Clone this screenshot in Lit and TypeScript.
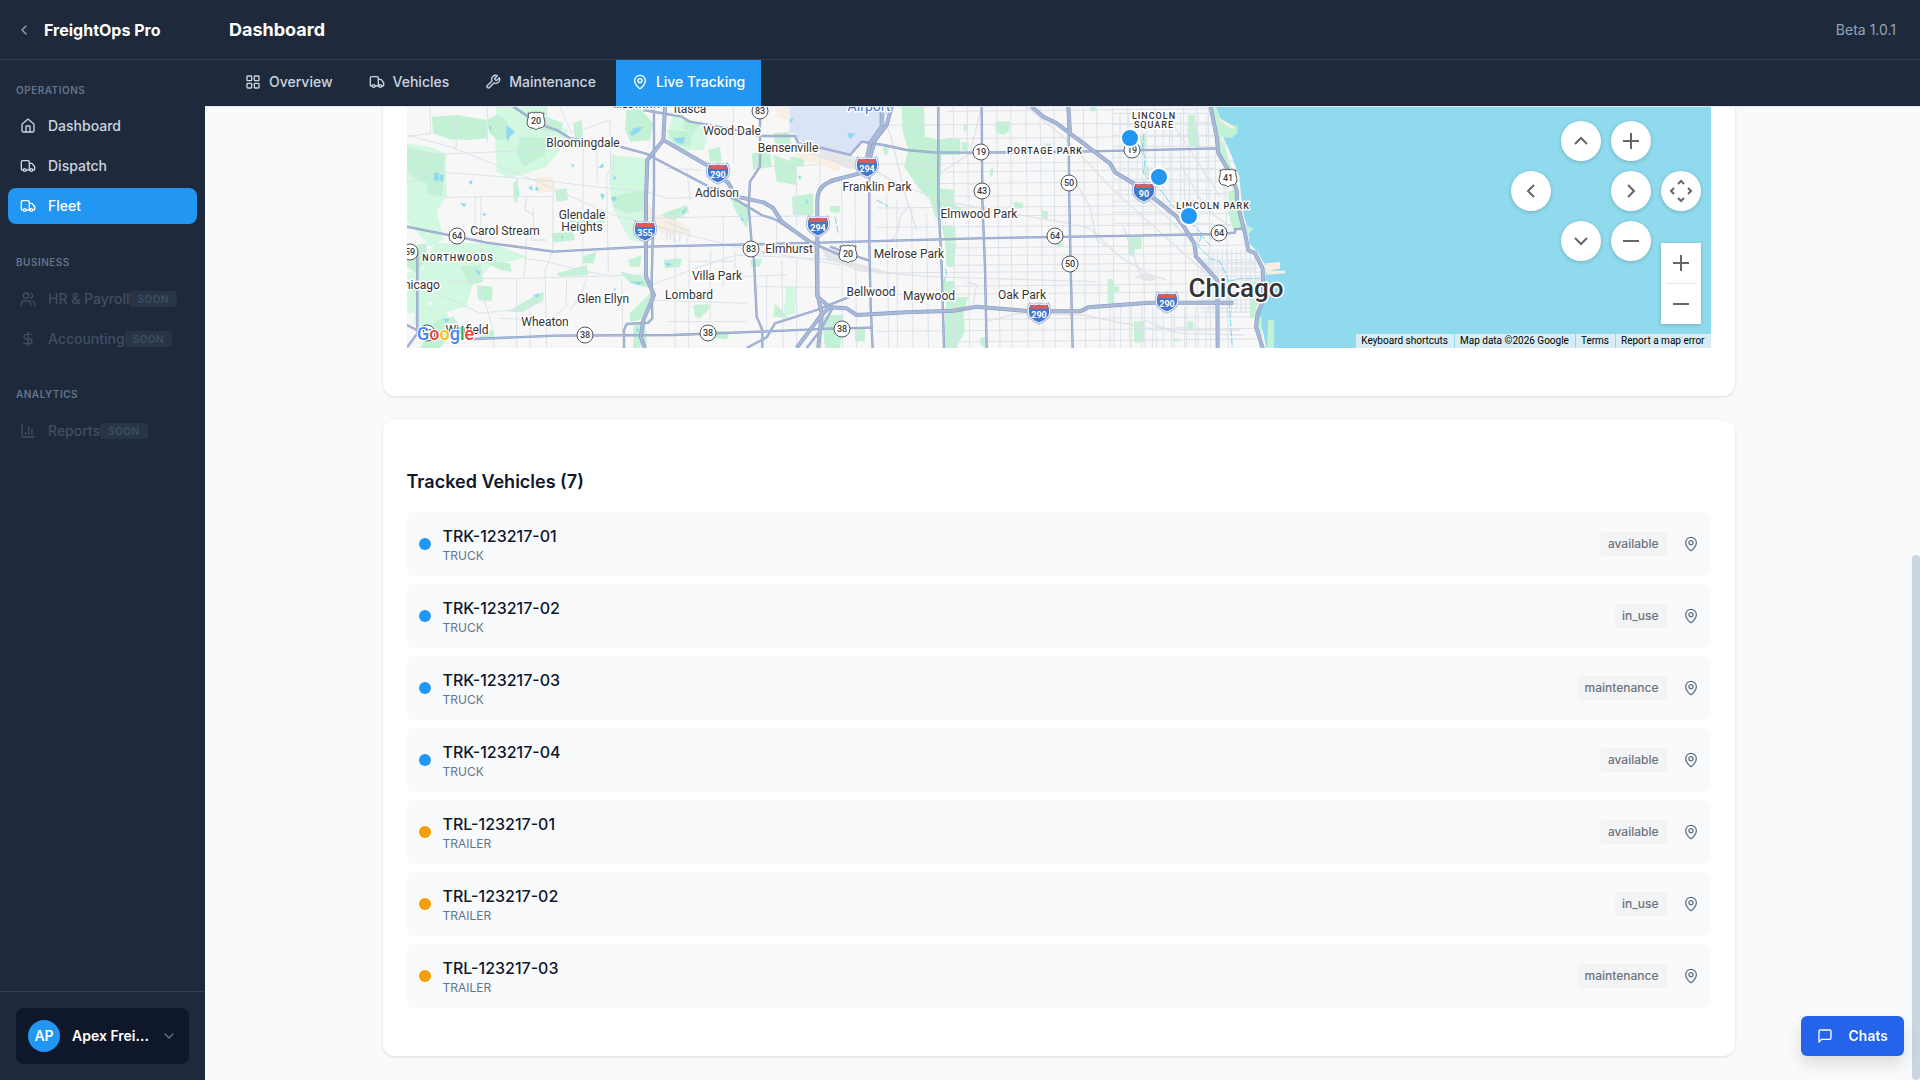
import { LitElement, html, svg, css } from "lit";
import { customElement, property } from "lit/decorators.js";
import { classMap } from "lit/directives/class-map.js";

/* ---------- Icons (24px grid, stroked) ---------- */

const pin = svg`<path d="M20 10c0 4.993-5.539 10.193-7.399 11.799a1 1 0 0 1-1.202 0C9.539 20.193 4 14.993 4 10a8 8 0 0 1 16 0"/><circle cx="12" cy="10" r="3"/>`;

const ICONS: Record<string, unknown> = {
  left: svg`<path d="m15 18-6-6 6-6"/>`,
  down: svg`<path d="m6 9 6 6 6-6"/>`,
  home: svg`<path d="M15 21v-8a1 1 0 0 0-1-1h-4a1 1 0 0 0-1 1v8"/><path d="M3 10a2 2 0 0 1 .709-1.528l7-5.999a2 2 0 0 1 2.582 0l7 5.999A2 2 0 0 1 21 10v9a2 2 0 0 1-2 2H5a2 2 0 0 1-2-2z"/>`,
  truck: svg`<path d="M14 18V6a2 2 0 0 0-2-2H4a2 2 0 0 0-2 2v11a1 1 0 0 0 1 1h2"/><path d="M15 18H9"/><path d="M19 18h2a1 1 0 0 0 1-1v-3.65a1 1 0 0 0-.22-.624l-3.48-4.35A1 1 0 0 0 17.52 8H14"/><circle cx="17" cy="18" r="2"/><circle cx="7" cy="18" r="2"/>`,
  users: svg`<path d="M16 21v-2a4 4 0 0 0-4-4H6a4 4 0 0 0-4 4v2"/><circle cx="9" cy="7" r="4"/><path d="M22 21v-2a4 4 0 0 0-3-3.87"/><path d="M16 3.13a4 4 0 0 1 0 7.75"/>`,
  dollar: svg`<path d="M12 2v20"/><path d="M17 5H9.500a3.500 3.500 0 0 0 0 7h5a3.500 3.500 0 0 1 0 7H6"/>`,
  chart: svg`<path d="M3 3v16a2 2 0 0 0 2 2h16"/><path d="M18 17V9"/><path d="M13 17V5"/><path d="M8 17v-3"/>`,
  grid: svg`<rect x="3" y="3" width="7" height="7" rx="1"/><rect x="14" y="3" width="7" height="7" rx="1"/><rect x="14" y="14" width="7" height="7" rx="1"/><rect x="3" y="14" width="7" height="7" rx="1"/>`,
  wrench: svg`<path d="M14.7 6.3a1 1 0 0 0 0 1.400l1.600 1.600a1 1 0 0 0 1.400 0l3.770-3.770a6 6 0 0 1-7.940 7.940l-6.910 6.910a2.120 2.120 0 0 1-3-3l6.910-6.910a6 6 0 0 1 7.940-7.940l-3.760 3.760z"/>`,
  pin,
  chat: svg`<path d="M21 15a2 2 0 0 1-2 2H7l-4 4V5a2 2 0 0 1 2-2h14a2 2 0 0 1 2 2z"/>`,
};

const icon = (name: string) => html`<svg class="icon" viewBox="0 0 24 24" aria-hidden="true">${ICONS[name]}</svg>`;

const iconStyles = css`
  .icon {
    display: block;
    flex: none;
    width: 16px;
    height: 16px;
    fill: none;
    stroke: currentColor;
    stroke-width: 2;
    stroke-linecap: round;
    stroke-linejoin: round;
  }
  * {
    box-sizing: border-box;
  }
  button {
    font: inherit;
    color: inherit;
    border: 0;
    background: none;
    padding: 0;
    cursor: pointer;
  }
  a {
    color: inherit;
    text-decoration: none;
  }
`;

/* ---------- Map ---------- */

/* Geometry is drawn at three units per pixel; the city lists
   start 1290 units further east than the suburban ones. */

const LAND =
  "0,-60 2432,-60 2448,20 2470,60 2512,80 2512,100 2480,115 2500,170 2520,230 2524,290 2530,330 2542,375 2560,385 2545,402 2550,430 2580,460 2600,500 2600,600 2572,640 2590,700 2602,760 0,760";

const WEST_PALE = [
  "20,130 90,140 138,160 140,290 110,330 130,420 90,440 20,360",
  "290,20 440,20 440,70 505,90 480,150 440,200 330,235 290,215 285,100",
  "635,165 740,175 738,430 690,420 640,330 628,250",
  "105,430 280,430 380,470 270,500 215,560 200,620 120,640 60,560 80,470",
  "20,520 80,500 110,580 60,640 20,640",
  "1160,560 1190,560 1185,640 1150,650",
  "820,40 930,90 910,150 840,150 800,110",
  "50,610 140,620 150,690 90,700 40,670",
  "20,260 60,240 120,300 80,340 20,330",
];

const WEST_PARKS = [
  "95,50 170,45 260,60 262,115 205,120 150,118 100,100",
  "260,60 290,45 320,60 330,115 290,120 270,100",
  "20,140 60,150 135,165 130,215 95,250 55,245 20,210",
  "80,215 135,225 125,290 80,280",
  "360,110 440,115 435,165 370,200 350,160",
  "425,45 490,70 480,100 430,90",
  "520,70 545,60 550,115 525,120",
  "680,30 720,25 760,70 750,120 690,125 675,85",
  "800,90 880,95 870,140 825,135",
  "850,60 900,70 885,95 850,88",
  "925,150 960,140 965,185 930,185",
  "1055,160 1110,155 1115,200 1060,210",
  "1120,100 1165,95 1180,150 1130,155",
  "1120,165 1190,190 1190,255 1130,245",
  "1170,170 1215,175 1210,200 1175,198",
  "1175,290 1240,280 1240,345 1180,345",
  "635,290 735,270 730,330 680,340 640,320",
  "465,270 500,265 505,300 470,305",
  "505,350 610,345 615,370 510,372",
  "455,400 520,395 525,420 460,428",
  "545,470 590,455 580,490 550,490",
  "470,520 560,495 565,525 480,530",
  "685,480 725,465 720,500 690,500",
  "660,515 735,530 750,565 690,550",
  "690,640 760,570 745,610 720,660 690,665",
  "700,680 735,660 740,730 715,744 700,744",
  "880,615 930,612 925,630 900,655 885,650",
  "930,690 990,695 980,718 940,715",
  "790,480 845,475 840,500 795,505",
  "790,340 860,315 868,335 820,362 780,360",
  "985,230 1010,290 1050,330 1040,385 1010,340 990,290",
  "1050,480 1085,475 1080,500 1055,500",
  "1125,610 1165,655 1120,650",
  "1265,650 1320,645 1320,744 1275,744",
  "180,500 240,495 250,545 210,555",
  "230,555 278,560 275,603 235,600",
  "340,625 400,590 430,575 430,600 370,635 320,635",
  "20,440 80,430 80,480 50,520 20,500",
  "110,660 160,650 190,690 140,720 120,744 60,744",
  "245,480 330,490 335,515 300,510",
  "340,250 355,235 352,310 342,300",
  "240,700 280,690 282,715 240,715",
];

const WEST_PONDS = [
  "105,215 118,220 115,245 100,240",
  "120,225 132,222 128,245 118,240",
  "320,75 345,95 330,110 322,125 318,100",
  "690,100 700,85 728,80 715,98 695,108",
  "820,115 855,112 850,132 830,128",
  "265,75 275,82 270,95",
  "205,245 218,240 215,255",
  "385,265 395,255 398,272",
  "408,258 418,270 406,272",
  "512,192 524,194 518,202",
  "595,205 608,190 612,202",
  "600,280 615,285 608,300",
  "632,292 648,290 650,302 636,302",
  "638,228 650,232 642,242",
  "248,338 260,342 252,350",
  "180,308 200,312 192,322",
  "845,335 862,320 850,345",
  "795,488 818,492 802,500",
  "225,508 242,515 235,525",
  "400,585 420,580 412,595",
  "690,545 735,545 715,555",
  "640,568 650,562 644,574",
  "710,683 718,690 708,698",
  "1085,452 1098,455 1090,464",
  "1195,225 1205,232 1198,240",
  "1220,298 1226,315 1216,305",
  "1020,340 1032,362 1024,362",
  "482,405 492,410 484,418",
  "130,655 150,658 138,668",
  "70,545 90,550 80,556",
  "355,260 358,290 353,280",
];

const CITY_PARKS = [
  "215,20 282,20 285,110 320,118 390,115 392,165 335,165 330,265 375,270 370,310 400,330 345,330 330,370 315,350 300,300 270,270 222,200 235,150 218,95",
  "395,125 418,128 412,155 395,150",
  "335,375 375,378 378,425 345,425",
  "345,425 378,430 372,500 350,500",
  "340,545 372,542 375,590 345,588",
  "350,595 415,590 400,640 405,690 380,744 342,744 345,650",
  "496,66 540,64 538,92 520,105 498,95",
  "550,306 580,308 578,325 552,325",
  "636,330 655,335 652,358 638,355",
  "480,210 490,202 488,225 480,230",
  "895,412 935,412 935,448 915,448 912,470 895,465",
  "833,538 850,538 852,558 868,560 866,575 850,575 850,612 833,610",
  "912,664 942,664 942,727 912,727",
  "1075,45 1095,45 1095,60 1105,105 1110,142 1080,140 1072,110",
  "930,108 948,108 945,150 932,148",
  "942,195 955,200 958,230 944,222",
  "1073,664 1090,664 1090,690 1073,692",
  "1030,716 1050,716 1050,724 1030,724",
  "75,686 105,686 105,724 75,724",
  "0,645 40,645 40,680 30,744 0,744",
  "0,318 30,318 28,338 0,335",
  "680,430 700,430 700,440 680,440",
  "640,130 665,132 660,142",
  "400,72 410,72 410,95 402,92",
  "450,715 465,712 465,744 452,735",
  "778,20 798,20 796,35 780,33",
  "160,140 172,142 175,162 162,165",
];

const SHORE_PARKS = [
  "1146,20 1158,20 1175,62 1200,82 1222,76 1222,100 1205,114 1172,112 1190,160 1210,220 1214,270 1222,330 1240,385 1210,390 1195,340 1195,275 1212,268 1200,215 1170,160 1158,100",
  "1245,375 1270,385 1255,402 1246,398",
  "1262,545 1285,545 1285,600 1272,655 1260,655",
  "1275,655 1295,650 1296,740 1312,740 1314,660 1333,660 1332,744 1290,744 1280,690",
];

const WEST_STREETS = [
  "20,105 150,140 400,240 640,345 740,370 1000,440 1320,495",
  "20,165 180,160 430,150",
  "20,250 60,235 85,215 240,225 420,240 600,262 740,275 800,295 890,292 960,262",
  "138,292 260,290 460,290",
  "170,60 168,150",
  "262,20 262,130",
  "440,20 440,150",
  "550,130 548,500",
  "480,20 515,100 630,60 632,210 620,225 625,520",
  "225,290 225,400",
  "243,290 243,540",
  "460,240 458,455 435,510 440,740",
  "20,545 60,560 180,610 240,640 330,630 430,605",
  "215,535 370,535 560,530 730,525",
  "380,380 378,455 372,535",
  "150,545 212,545 215,510",
  "375,475 440,485 560,515 620,525",
  "500,535 498,620 450,660 300,655",
  "240,560 280,690 282,744",
  "560,535 545,580 510,630",
  "825,360 825,740",
  "868,440 866,744",
  "932,450 930,660",
  "970,350 970,560",
  "740,355 960,350 1240,348",
  "740,560 900,500 1010,465 1130,470 1320,480",
  "740,600 1040,610",
  "800,665 1040,665",
  "1005,455 1005,530 1160,525",
  "1000,20 1000,190",
  "800,205 900,210",
  "1080,200 1250,195",
  "1145,480 1150,744",
  "1190,480 1190,744",
  "1100,530 1100,690",
  "1130,360 1130,430",
  "1190,200 1190,380",
  "1260,110 1260,290",
  "860,200 870,300",
  "640,165 640,240",
  "350,535 350,744",
  "390,600 390,744",
  "665,535 668,700",
  "870,484 1000,484",
  "1070,560 1320,562",
  "20,205 60,212 80,215",
  "400,320 400,380",
  "590,130 592,250",
  "90,20 92,100 20,110",
];

const WEST_RAIL = [
  "780,345 850,348",
  "795,365 870,395 860,425",
  "1240,420 1290,470 1320,480",
  "390,380 395,420 440,420",
  "1180,140 1320,190",
  "380,290 375,330 400,345",
  "800,385 800,425",
  "810,388 812,420",
  "820,392 822,425",
  "840,400 838,425",
];

const CITY_RAIL = [
  "140,20 180,100 230,300 260,390",
  "235,320 210,350 205,390 180,430",
  "0,130 200,250 330,300 480,330 720,370 780,385 870,470 960,525 1010,540",
  "0,480 60,490 180,520 300,530 470,535 800,545",
  "410,545 440,555 430,610",
  "470,665 560,640 760,645 980,690 1080,680",
  "590,20 700,110 850,270 960,370 1140,530",
  "745,110 900,250 1010,350 1090,430",
  "725,230 780,320 800,420 830,440",
  "330,220 420,160 455,20",
  "930,520 975,540",
  "940,660 1020,690 1230,690",
  "975,680 1050,700 1240,705",
  "880,380 930,520",
  "1000,30 1100,180 1170,290",
  "1050,190 1130,330 1200,380",
];

const CREEKS = [
  "942,100 938,140 945,180 940,220 1000,280 1020,310 1060,350 1100,385 1115,400 1105,440 1140,475 1170,485 1195,540 1200,640 1207,744",
  "1110,400 1130,425 1145,440",
  "1195,545 1230,535 1290,535",
  "15,350 25,400",
  "345,505 350,520 342,545",
  "140,300 175,320",
];

const HIGHWAYS = [
  "M795,20 L790,120 L742,180 L738,300 L738,530 L762,585 L730,660 L722,710 L735,744",
  "M790,120 L920,195 L985,250 L1010,290 L1090,307 L1120,325 L1145,365 L1200,405 L1250,440 L1252,590 L1290,622 L1340,625 L1370,645 L1520,637 L1660,632 L1730,620 L1890,634 L2040,634 L2065,622 L2250,608 L2500,608",
  "M1400,180 L1410,130 L1445,80 L1445,20 M1408,180 L1425,120 L1460,75 L1475,20",
  "M1290,243 L1400,215 M1320,237 C1270,245 1252,270 1252,300 L1252,580 L1265,640 L1255,744",
  "M1190,744 L1260,650 L1290,620",
  "M1895,20 L1930,50 L1970,70 L2010,100 L2070,145 L2130,190 L2145,217 L2200,250 L2275,305 L2330,350 L2355,385 L2383,430 L2388,470 L2452,540 L2453,744",
  "M2005,20 L2010,100",
  "M2432,20 L2450,110 L2455,160 L2490,220 L2510,270 L2512,310 L2535,400 L2545,450 L2565,460 L2588,505 L2590,600 L2573,640 L2568,680 L2588,744",
];

const ARTERIALS = [
  "M340,20 L385,50 L435,78 L470,90 L510,115 L660,140 L740,162 L930,262 L1010,300 L1085,345 L1130,360 L1190,400 L1240,430 L1320,465",
  "M730,30 L845,50 L870,65 L1000,88 L1080,108 L1185,108 L1195,130 L1270,145 L1350,165 L1385,125 L1450,135 L1520,150 L1600,157 L1740,158 L2040,155 L2455,145",
  "M762,20 L762,270 L755,540 L757,655 L745,668 L680,672 L672,690 L672,744",
  "M1080,20 L1080,200 L1050,245 L1046,320 L1055,430 L1062,480 L1070,650 L1087,690 L1087,744",
  "M20,380 L170,410 L260,428 L460,455 L740,440 L1055,433 L1290,427 L1730,415 L2210,407 L2455,402 L2505,398 L2505,388 L2530,385",
  "M52,460 L52,700 L20,744 M20,675 L70,700",
  "M220,717 L470,707 L820,705 L1080,695 L1290,686 L1415,683",
  "M1040,744 L1100,712 L1125,670 L1250,630 L1350,590",
  "M1220,744 L1262,690 L1300,620",
  "M1290,440 L1350,462 L1408,482",
  "M1408,200 L1408,430 L1412,620 L1418,744",
  "M1615,20 L1615,300 L1625,500 L1632,744",
  "M1745,20 L1747,300 L1755,500 L1760,744",
  "M2005,20 L2008,300 L2012,500 L2018,744",
];

const cityGrid = (() => {
  const d: string[] = [];
  const columns = [35, 75, 170, 200, 245, 290, 370, 412, 500, 542, 588, 630, 672, 760, 800, 848, 893, 935, 975, 1018, 1060, 1100, 1135, 1185];
  columns.forEach((x, i) => d.push(`M${1290 + x},${i < 6 ? 240 + i * 20 : 20} l${4 + (i % 3) * 3},730`));
  const rows = [30, 72, 112, 188, 212, 248, 285, 320, 345, 378, 440, 465, 492, 515, 555, 580, 655, 690, 722];
  rows.forEach((y, i) => d.push(`M${i % 2 ? 1430 : 1640},${y + 4} L2570,${y - 5}`));
  for (let y = 480; y < 640; y += 12) d.push(`M2400,${y} h180`);
  for (let x = 2425; x < 2570; x += 14) d.push(`M${x},450 v190`);
  for (let y = 40; y < 380; y += 33) d.push(`M2140,${y} h300`);
  for (let x = 2160; x < 2480; x += 26) d.push(`M${x},40 v260`);
  for (let x = 2130; x < 2420; x += 32) d.push(`M${x},620 v124`);
  return d.join(" ");
})();

type Label = [x: number, y: number, text: string];

/* Labels, shields and markers use plain pixels within the 1304 x 260 sheet. */
const TOWNS: Label[] = [
  [176, 59, "Bloomingdale"],
  [283, 25, "Itasca"],
  [325, 47, "Wood Dale"],
  [381, 64, "Bensenville"],
  [310, 109, "Addison"],
  [175, 131, "Glendale"],
  [175, 143, "Heights"],
  [98, 147, "Carol Stream"],
  [382, 165, "Elmhurst"],
  [310, 192, "Villa Park"],
  [282, 211, "Lombard"],
  [196, 215, "Glen Ellyn"],
  [138, 238, "Wheaton"],
  [60, 246, "Winfield"],
  [11, 201, "Chicago"],
  [470, 103, "Franklin Park"],
  [572, 130, "Elmwood Park"],
  [502, 170, "Melrose Park"],
  [464, 208, "Bellwood"],
  [522, 212, "Maywood"],
  [615, 211, "Oak Park"],
];

const DISTRICTS: Label[] = [
  [51, 173, "NORTHWOODS"],
  [230, 20, "MEDINAH"],
  [638, 66, "PORTAGE PARK"],
  [747, 31, "LINCOLN"],
  [747, 40, "SQUARE"],
  [806, 121, "LINCOLN PARK"],
];

const STATE_ROUTES: Label[] = [
  [50, 148, "64"], [3, 164, "59"], [353, 23, "83"], [344, 161, "83"], [178, 247, "38"],
  [301, 245, "38"], [435, 241, "38"], [574, 64, "19"], [725, 62, "19"], [575, 103, "43"],
  [662, 95, "50"], [663, 176, "50"], [648, 148, "64"], [812, 145, "64"], [20, 245, "59"],
];

const US_ROUTES: Label[] = [[129, 33, "20"], [441, 166, "20"], [821, 90, "41"]];

const INTERSTATES: Label[] = [
  [311, 85, "290"], [238, 143, "355"], [411, 138, "294"], [460, 79, "294"],
  [737, 104, "90"], [632, 225, "290"], [760, 214, "290"],
];

const MARKERS: [number, number][] = [[723, 50], [752, 89], [782, 128]];

const poly = (list: string[]) => list.map((p) => svg`<polygon points=${p} />`);
const line = (list: string[]) => list.map((p) => svg`<polyline points=${p} />`);
const paths = (list: string[]) => list.map((d) => svg`<path d=${d} />`);

@customElement("fleet-map")
class FleetMap extends LitElement {
  static styles = [
    iconStyles,
    css`
      :host {
        display: block;
        position: relative;
        overflow: hidden;
        background: #90daee;
        font-family: Roboto, "Liberation Sans", sans-serif;
      }
      .sheet {
        display: block;
        width: 100%;
        height: 260px;
      }
      .land { fill: #f7f7f7; }
      .pale { fill: #d3f8e2; }
      .park { fill: #c3f1d5; }
      .water { fill: #90daee; }
      .airport { fill: #dbe4f7; }
      .runway { fill: #e6e6e8; }
      .sand { fill: #f8eee2; }
      .street, .rail, .creek, .edge, .core {
        fill: none;
        stroke-linejoin: round;
      }
      .street { stroke: #dae2ea; stroke-width: 3; }
      .rail { stroke: #e0e3e8; stroke-width: 4; }
      .creek { stroke: #7bd3ee; stroke-width: 3; stroke-dasharray: 22 5; }
      .edge { stroke: #8c9ec5; }
      .core { stroke: #a9b9d8; }
      .wide.edge { stroke-width: 12; }
      .wide.core { stroke-width: 8; }
      .slim.edge { stroke-width: 7; }
      .slim.core { stroke-width: 4; }
      text { text-anchor: middle; }
      .town, .district, .city, .place {
        paint-order: stroke;
        stroke: #ffffff;
        stroke-width: 3px;
        stroke-linejoin: round;
        fill: #333436;
      }
      .town { font-size: 12px; }
      .district { font-size: 9px; font-weight: 500; letter-spacing: 1px; }
      .place { font-size: 14px; fill: #3f74d1; }
      .city { font-size: 26px; font-weight: 500; }
      .plate { fill: #ffffff; stroke: #555759; stroke-width: 1; }
      .number { font-size: 9px; font-weight: 500; fill: #3c3e40; }
      .shield { fill: #3f78cc; stroke: #ffffff; stroke-width: 1; }
      .halo { fill: none; stroke: #a9b9d8; stroke-width: 3; }
      .crown { fill: #dd5a58; }
      .shield-number { font-size: 9px; font-weight: 700; fill: #ffffff; }
      .marker { fill: #2196f3; stroke: #ffffff; stroke-width: 2; }
      .logo {
        text-anchor: start;
        font-size: 18px;
        font-weight: 500;
        paint-order: stroke;
        stroke: #ffffff;
        stroke-width: 2px;
      }
      .g-blue { fill: #4285f4; }
      .g-red { fill: #ea4335; }
      .g-yellow { fill: #fbbc04; }
      .g-green { fill: #34a853; }
      .pad {
        position: absolute;
        right: 10px;
        bottom: 87px;
        display: grid;
        grid-template-columns: repeat(4, 40px);
        grid-template-rows: repeat(3, 40px);
        gap: 10px;
      }
      .round {
        display: grid;
        place-items: center;
        border-radius: 50%;
        background: #ffffff;
        box-shadow: 0 1px 4px rgba(0, 0, 0, 0.2);
      }
      .up { grid-area: 1 / 2; }
      .in { grid-area: 1 / 3; }
      .west { grid-area: 2 / 1; }
      .east { grid-area: 2 / 3; }
      .camera { grid-area: 2 / 4; }
      .south { grid-area: 3 / 2; }
      .out { grid-area: 3 / 3; }
      .glyph {
        display: block;
        width: 24px;
        height: 24px;
        fill: none;
        stroke: #666666;
        stroke-width: 2;
      }
      .zoom {
        position: absolute;
        right: 10px;
        bottom: 24px;
        width: 40px;
        display: flex;
        flex-direction: column;
        align-items: center;
        background: #ffffff;
        box-shadow: 0 1px 4px rgba(0, 0, 0, 0.2);
      }
      .zoom button {
        display: grid;
        place-items: center;
        width: 40px;
        height: 40px;
      }
      .rule {
        width: 30px;
        height: 1px;
        background: #e6e6e6;
      }
      .credits {
        position: absolute;
        right: 0;
        bottom: 0;
        display: flex;
        gap: 1px;
        color: #000000;
      }
      .credits > * {
        padding: 0 6px 0 5px;
        background: rgba(245, 245, 245, 0.7);
        font-size: 10px;
        line-height: 14px;
        white-space: nowrap;
      }
    `,
  ];

  private glyph(d: string) {
    return html`<svg class="glyph" viewBox="0 0 24 24" aria-hidden="true"><path d=${d} /></svg>`;
  }

  render() {
    const plus = "M4 12H20M12 4V20";
    const minus = "M4 12H20";
    return html`
      <svg class="sheet" viewBox="0 0 1304 260" preserveAspectRatio="xMaxYMax slice" role="img" aria-label="Vehicle map">
        <defs>
          <clipPath id="shore"><polygon points=${LAND} /></clipPath>
        </defs>
        <g transform="translate(-7 12) scale(0.33333)">
          <rect class="water" x="0" y="-60" width="4000" height="830" />
          <polygon class="land" points=${LAND} />
          <g class="pale">${poly(WEST_PALE)}</g>
          <g class="park">${poly(WEST_PARKS)}</g>
          <g class="sand">
            <polygon points="405,232 458,230 460,275 410,278" />
            <polygon points="742,305 765,340 845,370 870,385 865,400 790,405 745,360" />
            <polygon points="1130,25 1165,20 1165,60 1130,50" />
            <polygon points="1160,140 1320,175 1320,215 1210,180" />
            <polygon points="1240,720 1270,725 1270,744 1240,740" />
            <polygon points="2600,490 2640,486 2640,506 2608,512 2655,512 2655,520 2605,524" />
          </g>
          <polygon class="airport" points="1168,20 1470,20 1440,90 1410,125 1385,122 1350,162 1270,145 1195,120 1185,100 1168,98" />
          <g class="runway">
            <polygon points="1250,140 1400,190 1400,210 1340,205 1270,170" />
            <polygon points="1290,455 1370,490 1480,520 1380,515 1290,480" />
            <polygon points="2200,530 2250,520 2270,535 2250,545" />
            <polygon points="1260,440 1320,455 1320,490 1280,480" />
          </g>
          <g class="water">${poly(WEST_PONDS)}
            <polygon points="1342,98 1366,100 1352,118 1345,112" />
            <polygon points="1168,60 1180,52 1176,70" />
            <polygon points="1525,40 1538,38 1535,46" />
          </g>
          <g class="park" transform="translate(1290 0)">${poly(CITY_PARKS)}</g>
          <g class="rail">${line(WEST_RAIL)}</g>
          <g clip-path="url(#shore)">
            <g class="rail" transform="translate(1290 0)">${line(CITY_RAIL)}</g>
            <path class="street" d=${cityGrid} />
          </g>
          <g class="street">${line(WEST_STREETS)}</g>
          <polygon class="water" points="2446,10 2700,10 2700,744 2600,744 2590,690 2576,650 2592,600 2598,500 2575,460 2548,430 2545,385 2532,350 2524,290 2518,230 2496,170 2470,110" />
          <g class="park" transform="translate(1290 0)">${poly(SHORE_PARKS)}</g>
          <g class="sand">
            <polygon points="2452,52 2502,78 2500,88 2472,72" />
            <polygon points="2596,490 2640,486 2640,506 2608,512 2655,512 2655,520 2600,524" />
          </g>
          <g class="creek" transform="translate(1290 0)">${line(CREEKS)}</g>
          <g class="slim edge">${paths(ARTERIALS)}</g>
          <g class="slim core">${paths(ARTERIALS)}</g>
          <g class="wide edge">${paths(HIGHWAYS)}</g>
          <g class="wide core">${paths(HIGHWAYS)}</g>
        </g>

        ${STATE_ROUTES.map(([x, y, t]) => svg`
          <circle class="plate" cx=${x} cy=${y} r="8" />
          <text class="number" x=${x} y=${y + 3}>${t}</text>`)}
        ${US_ROUTES.map(([x, y, t]) => svg`
          <path class="plate" transform="translate(${x} ${y})" d="M-8-8q2 1 4-1q2 2 4 0q2 2 4 0q2 2 4 1q-1 3 0 5q2 5 0 8q-1 2-4 2q-3 0-4 2q-1-2-4-2q-3 0-4-2q-2-3 0-8q1-2 0-5z" />
          <text class="number" x=${x} y=${y + 3}>${t}</text>`)}
        ${TOWNS.map(([x, y, t]) => svg`<text class="town" x=${x} y=${y}>${t}</text>`)}
        ${DISTRICTS.map(([x, y, t]) => svg`<text class="district" x=${x} y=${y}>${t}</text>`)}
        <text class="place" x="462" y="23">Airport</text>
        ${INTERSTATES.map(([x, y, t]) => svg`
          <g transform="translate(${x} ${y})">
            <path class="halo" d="M-9-9q4 2 9 0q5 2 9 0q4 9-1 14q-3 3-8 5q-5-2-8-5q-5-5-1-14z" />
            <path class="shield" d="M-9-9q4 2 9 0q5 2 9 0q4 9-1 14q-3 3-8 5q-5-2-8-5q-5-5-1-14z" />
            <path class="crown" d="M-8-8q4 1 8 0q4 1 8 0l1 4h-18z" />
          </g>
          <text class="shield-number" x=${x} y=${y + 5}>${t}</text>`)}
        <text class="city" x="829" y="209">Chicago</text>
        ${MARKERS.map(([x, y]) => svg`<circle class="marker" cx=${x} cy=${y} r="9" />`)}
        <text class="logo" x="10" y="252"><tspan class="g-blue">G</tspan><tspan class="g-red">o</tspan><tspan class="g-yellow">o</tspan><tspan class="g-blue">g</tspan><tspan class="g-green">l</tspan><tspan class="g-red">e</tspan></text>
      </svg>

      <div class="pad">
        <button class="round up" aria-label="Move up">${this.glyph("M6 15L12 9L18 15")}</button>
        <button class="round in" aria-label="Zoom in">${this.glyph(plus)}</button>
        <button class="round west" aria-label="Move left">${this.glyph("M15 6L9 12L15 18")}</button>
        <button class="round east" aria-label="Move right">${this.glyph("M9 6L15 12L9 18")}</button>
        <button class="round camera" aria-label="Map camera controls">
          ${this.glyph("M9 5L12 2L15 5M9 19L12 22L15 19M5 9L2 12L5 15M19 9L22 12L19 15")}
        </button>
        <button class="round south" aria-label="Move down">${this.glyph("M6 9L12 15L18 9")}</button>
        <button class="round out" aria-label="Zoom out">${this.glyph(minus)}</button>
      </div>
      <div class="zoom">
        <button aria-label="Zoom in">${this.glyph(plus)}</button>
        <span class="rule"></span>
        <button aria-label="Zoom out">${this.glyph(minus)}</button>
      </div>
      <div class="credits">
        <button>Keyboard shortcuts</button>
        <span>Map data ©2026 Google</span>
        <a href="#terms">Terms</a>
        <a href="#report">Report a map error</a>
      </div>
    `;
  }
}

/* ---------- Vehicle row ---------- */

interface Vehicle {
  unit: string;
  type: "TRUCK" | "TRAILER";
  status: string;
}

@customElement("vehicle-row")
class VehicleRow extends LitElement {
  @property({ attribute: false }) vehicle!: Vehicle;

  static styles = [
    iconStyles,
    css`
      :host {
        display: flex;
        align-items: center;
        gap: 12px;
        padding: 12px;
        border-radius: 8px;
        background: #f8fafc;
      }
      .dot {
        flex: none;
        width: 12px;
        height: 12px;
        border-radius: 50%;
        background: #2196f3;
      }
      .dot.trailer { background: #f59e0b; }
      .names { flex: 1; }
      .unit {
        font-size: 16px;
        line-height: 24px;
        font-weight: 500;
        color: #0f172a;
      }
      .type {
        font-size: 12px;
        line-height: 16px;
        color: #64748b;
      }
      .side {
        display: flex;
        align-items: center;
        gap: 16px;
        color: #64748b;
      }
      .status {
        padding: 4px 8px;
        border-radius: 4px;
        background: #f3f4f6;
        color: #6b7280;
        font-size: 12px;
        line-height: 16px;
        font-weight: 500;
      }
    `,
  ];

  render() {
    const { unit, type, status } = this.vehicle;
    return html`
      <span class=${classMap({ dot: true, trailer: type === "TRAILER" })}></span>
      <div class="names">
        <div class="unit">${unit}</div>
        <div class="type">${type}</div>
      </div>
      <div class="side">
        <span class="status">${status}</span>
        <button aria-label="Locate ${unit}">${icon("pin")}</button>
      </div>
    `;
  }
}

/* ---------- Shell ---------- */

const SECTIONS = [
  {
    title: "OPERATIONS",
    items: [
      { name: "Dashboard", icon: "home" },
      { name: "Dispatch", icon: "truck" },
      { name: "Fleet", icon: "truck", active: true },
    ],
  },
  {
    title: "BUSINESS",
    items: [
      { name: "HR & Payroll", icon: "users", soon: true },
      { name: "Accounting", icon: "dollar", soon: true },
    ],
  },
  { title: "ANALYTICS", items: [{ name: "Reports", icon: "chart", soon: true }] },
] as { title: string; items: { name: string; icon: string; active?: boolean; soon?: boolean }[] }[];

const TABS = [
  { name: "Overview", icon: "grid" },
  { name: "Vehicles", icon: "truck" },
  { name: "Maintenance", icon: "wrench" },
  { name: "Live Tracking", icon: "pin", active: true },
];

const VEHICLES: Vehicle[] = [
  { unit: "TRK-123217-01", type: "TRUCK", status: "available" },
  { unit: "TRK-123217-02", type: "TRUCK", status: "in_use" },
  { unit: "TRK-123217-03", type: "TRUCK", status: "maintenance" },
  { unit: "TRK-123217-04", type: "TRUCK", status: "available" },
  { unit: "TRL-123217-01", type: "TRAILER", status: "available" },
  { unit: "TRL-123217-02", type: "TRAILER", status: "in_use" },
  { unit: "TRL-123217-03", type: "TRAILER", status: "maintenance" },
];

@customElement("app-root")
class AppRoot extends LitElement {
  static styles = [
    iconStyles,
    css`
      :host {
        display: grid;
        grid-template-columns: 205px minmax(0, 1fr);
        height: 100vh;
        overflow: hidden;
        background: #f8fafc;
        color: #0f172a;
        font-family: Inter, "Liberation Sans", sans-serif;
        font-size: 14px;
        line-height: 20px;
      }
      .sidebar {
        display: flex;
        flex-direction: column;
        min-height: 0;
        background: #1e293b;
        color: #cbd5e1;
      }
      .brand {
        display: flex;
        align-items: center;
        gap: 12px;
        height: 60px;
        padding: 0 16px;
        border-bottom: 1px solid #334155;
      }
      .brand button { color: #94a3b8; }
      .brand-name {
        font-size: 16px;
        font-weight: 700;
        color: #ffffff;
      }
      .menu {
        flex: 1;
        display: flex;
        flex-direction: column;
        gap: 24px;
        padding: 16px 8px;
      }
      .section {
        display: flex;
        flex-direction: column;
        gap: 4px;
      }
      .section-title {
        margin: 0;
        padding: 8px;
        font-size: 10px;
        line-height: 12px;
        font-weight: 600;
        letter-spacing: 0.5px;
        color: #64748b;
      }
      .item {
        display: flex;
        align-items: center;
        height: 36px;
        padding: 0 12px;
        border-radius: 8px;
        font-weight: 500;
      }
      .item .icon { margin-right: 12px; }
      .item.active {
        background: #2196f3;
        color: #ffffff;
      }
      .item.soon {
        padding-top: 1px;
        color: #64748b;
        opacity: 0.5;
      }
      .tag {
        padding: 2px 8px;
        border-radius: 4px;
        background: #334155;
        font-size: 10px;
        line-height: 12px;
        font-weight: 600;
        letter-spacing: 0.5px;
      }
      .account {
        padding: 16px;
        border-top: 1px solid #334155;
      }
      .account-button {
        display: flex;
        align-items: center;
        gap: 12px;
        width: 100%;
        padding: 12px;
        border-radius: 8px;
        background: #0f172a;
        color: #64748b;
      }
      .avatar {
        flex: none;
        width: 32px;
        border-radius: 50%;
        background: #2196f3;
        color: #ffffff;
        line-height: 32px;
        font-weight: 600;
      }
      .company {
        flex: 1;
        text-align: left;
        white-space: nowrap;
        font-weight: 600;
        color: #ffffff;
      }
      .page {
        display: flex;
        flex-direction: column;
        min-height: 0;
      }
      .topbar {
        flex: none;
        display: flex;
        align-items: center;
        justify-content: space-between;
        height: 60px;
        padding: 0 24px;
        background: #1e293b;
        border-bottom: 1px solid #334155;
      }
      .title {
        margin: 0;
        font-size: 18px;
        font-weight: 700;
        color: #ffffff;
      }
      .version {
        font-size: 14px;
        color: #94a3b8;
      }
      .tabs {
        flex: none;
        display: flex;
        gap: 4px;
        padding: 0 24px;
        background: #1e293b;
        color: #cbd5e1;
      }
      .tab {
        display: flex;
        align-items: center;
        gap: 8px;
        height: 46px;
        padding: 0 16px 2px;
        font-weight: 500;
      }
      .tab.active {
        background: #2196f3;
        color: #ffffff;
      }
      .viewport {
        flex: 1;
        display: flex;
        min-height: 0;
        border-top: 1px solid #e2e8f0;
      }
      .scroll {
        flex: 1;
        display: flex;
        flex-direction: column;
        justify-content: flex-end;
        min-width: 0;
        overflow: hidden;
      }
      .content {
        display: flex;
        flex-direction: column;
        gap: 24px;
        width: 100%;
        max-width: 1400px;
        margin: 0 auto;
        padding: 24px;
      }
      .card {
        padding: 48px 24px;
        border-radius: 12px;
        background: #ffffff;
        box-shadow: 0 1px 3px rgba(0, 0, 0, 0.12);
      }
      .card-title {
        margin: 0 0 16px;
        font-size: 18px;
        line-height: 28px;
        font-weight: 600;
      }
      .list {
        display: flex;
        flex-direction: column;
        gap: 8px;
      }
      .scrollbar {
        flex: none;
        display: flex;
        align-items: flex-end;
        width: 8px;
      }
      .thumb {
        width: 8px;
        height: 54%;
        border-radius: 4px;
        background: #cbd5e1;
      }
      .chats {
        position: fixed;
        right: 16px;
        bottom: 24px;
        display: flex;
        align-items: center;
        gap: 16px;
        height: 40px;
        padding: 0 16px;
        border-radius: 6px;
        background: #2563eb;
        color: #ffffff;
        font-weight: 600;
        box-shadow: 0 8px 16px rgba(0, 0, 0, 0.12);
      }
    `,
  ];

  render() {
    return html`
      <aside class="sidebar">
        <div class="brand">
          <button aria-label="Collapse sidebar">${icon("left")}</button>
          <span class="brand-name">FreightOps Pro</span>
        </div>
        <nav class="menu" aria-label="Main">
          ${SECTIONS.map(
            (s) => html`<div class="section">
              <h2 class="section-title">${s.title}</h2>
              ${s.items.map(
                (i) => html`<a class=${classMap({ item: true, active: !!i.active, soon: !!i.soon })} href="#${i.icon}">
                  ${icon(i.icon)}<span>${i.name}</span>${i.soon ? html`<span class="tag">SOON</span>` : ""}
                </a>`,
              )}
            </div>`,
          )}
        </nav>
        <div class="account">
          <button class="account-button">
            <span class="avatar">AP</span>
            <span class="company">Apex Frei...</span>
            ${icon("down")}
          </button>
        </div>
      </aside>
      <div class="page">
        <header class="topbar">
          <h1 class="title">Dashboard</h1>
          <span class="version">Beta 1.0.1</span>
        </header>
        <nav class="tabs" aria-label="Fleet">
          ${TABS.map(
            (t) => html`<a class=${classMap({ tab: true, active: !!t.active })} href="#${t.icon}">${icon(t.icon)}${t.name}</a>`,
          )}
        </nav>
        <div class="viewport">
          <main class="scroll">
            <div class="content">
              <section class="card"><fleet-map></fleet-map></section>
              <section class="card">
                <h2 class="card-title">Tracked Vehicles (${VEHICLES.length})</h2>
                <div class="list">${VEHICLES.map((v) => html`<vehicle-row .vehicle=${v}></vehicle-row>`)}</div>
              </section>
            </div>
          </main>
          <div class="scrollbar" aria-hidden="true"><div class="thumb"></div></div>
        </div>
      </div>
      <button class="chats">${icon("chat")}Chats</button>
    `;
  }
}
